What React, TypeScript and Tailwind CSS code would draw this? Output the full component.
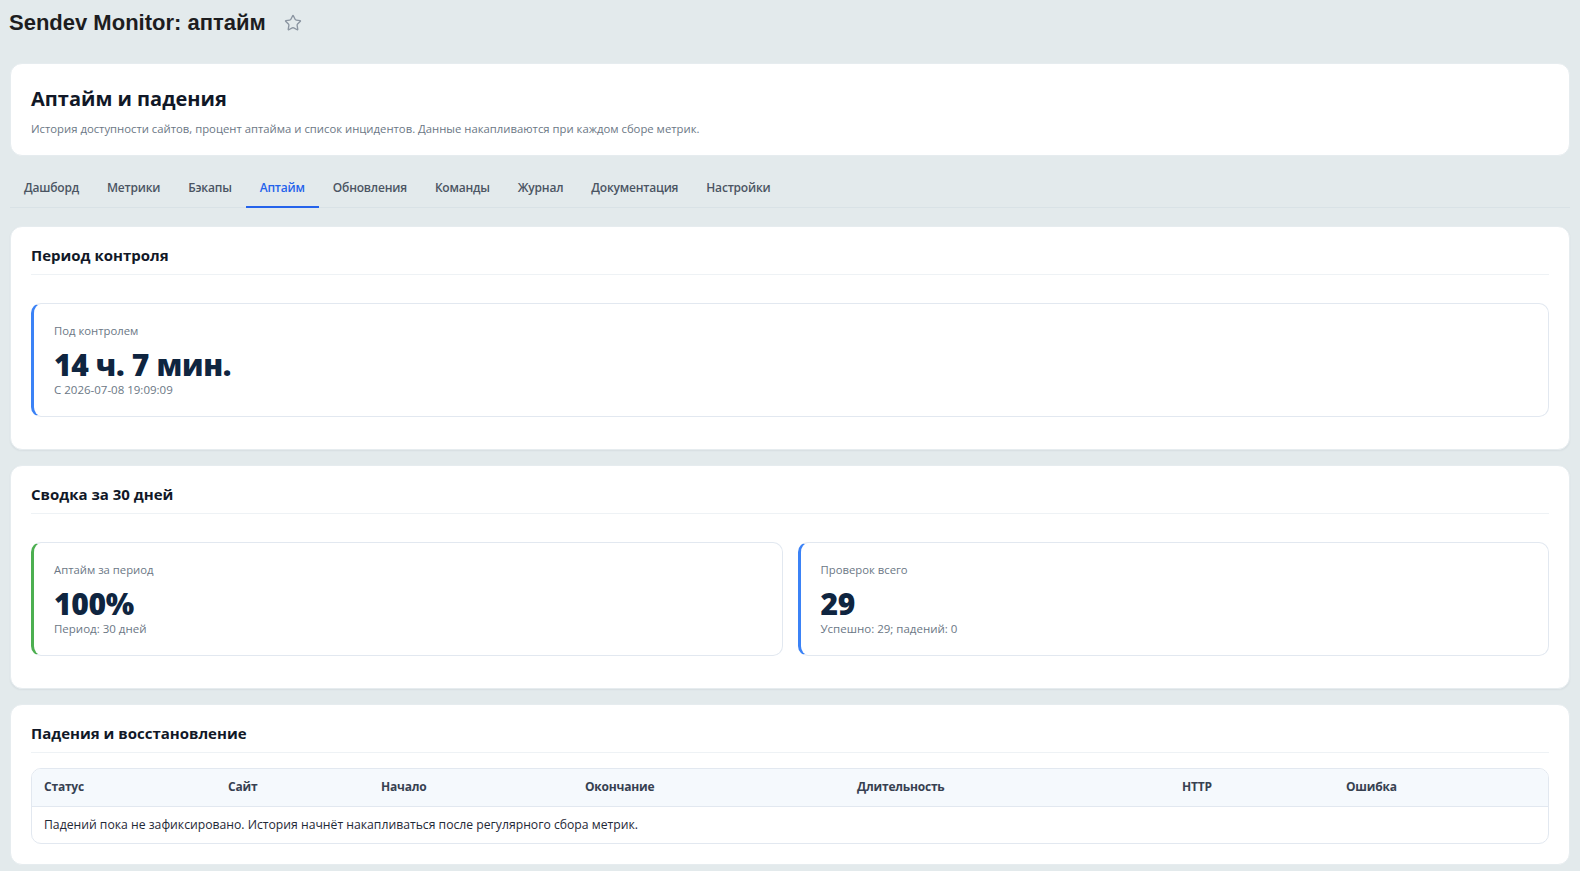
import { Star } from "lucide-react";

const tabs = ["Дашборд", "Метрики", "Бэкапы", "Аптайм", "Обновления", "Команды", "Журнал", "Документация", "Настройки"];

const columns = [
  { name: "Статус", w: "w-[184px]" },
  { name: "Сайт", w: "w-[153px]" },
  { name: "Начало", w: "w-[204px]" },
  { name: "Окончание", w: "w-[272px]" },
  { name: "Длительность", w: "w-[325px]" },
  { name: "HTTP", w: "w-[164px]" },
  { name: "Ошибка", w: "" },
];

function StatCard({ label, value, note, accent }: { label: string; value: string; note: string; accent: string }) {
  return (
    <div className={`flex-1 rounded-[10px] border border-[#e2e8f0] border-l-[3px] ${accent} bg-white pl-[20px] pt-[20px] pb-[19px]`}>
      <div className="text-[11.3px] leading-[14px] text-[#6b7785]">{label}</div>
      <div className="mt-[10px] text-[30px] leading-[33px] font-extrabold tracking-[-0.3px] text-[#0f2540]">{value}</div>
      <div className="mt-[1px] text-[11.5px] leading-[15px] text-[#6b7785]">{note}</div>
    </div>
  );
}

function Section({ title, children }: { title: string; children: React.ReactNode }) {
  return (
    <section className="rounded-[12px] bg-white px-[20px] pt-[18px] pb-[32px] shadow-[0_1px_2px_rgba(15,37,64,0.06)] border border-[#e6ecef]">
      <h2 className="text-[15px] leading-[20px] font-bold text-[#111827] pb-[9px] border-b border-[#eef2f5]">{title}</h2>
      <div className="mt-[28px]">{children}</div>
    </section>
  );
}

export default function App() {
  return (
    <div className="min-h-screen bg-[#e3eaec] px-[10px] pb-[10px] font-['Open_Sans',sans-serif]">
      {/* page title */}
      <div className="flex items-center h-[44px] pt-[1px]">
        <h1 className="text-[22px] leading-[26px] font-bold text-[#1d1d1f] font-['Liberation_Sans',Arial,sans-serif] -ml-[1px]">
          Sendev Monitor: аптайм
        </h1>
        <Star className="ml-[18px] w-[18px] h-[18px] text-[#8b95a1]" strokeWidth={1.8} />
      </div>

      {/* header card */}
      <div className="mt-[19px] rounded-[12px] bg-white px-[20px] pt-[22px] pb-[19px] border border-[#e6ecef]">
        <h2 className="text-[20px] leading-[26px] font-bold text-[#111827]">Аптайм и падения</h2>
        <p className="mt-[9px] text-[11.3px] leading-[15px] text-[#6b7785]">
          История доступности сайтов, процент аптайма и список инцидентов. Данные накапливаются при каждом сборе метрик.
        </p>
      </div>

      {/* tabs */}
      <nav className="mt-[10px] flex border-b border-[#d9e2e6]">
        {tabs.map((t) => (
          <div
            key={t}
            className={`px-[14px] pt-[14px] pb-[10px] text-[12px] leading-[16px] font-semibold border-b-[2px] -mb-[1px] tracking-[-0.2px] ${
              t === "Аптайм" ? "text-[#2563eb] border-[#2563eb]" : "text-[#4b5563] border-transparent"
            }`}
          >
            {t}
          </div>
        ))}
      </nav>

      <div className="mt-[18px] flex flex-col gap-[15px]">
        <Section title="Период контроля">
          <StatCard label="Под контролем" value="14 ч. 7 мин." note="С 2026-07-08 19:09:09" accent="border-l-[#3b82f6]" />
        </Section>

        <Section title="Сводка за 30 дней">
          <div className="flex gap-[15px]">
            <StatCard label="Аптайм за период" value="100%" note="Период: 30 дней" accent="border-l-[#4caf50]" />
            <StatCard label="Проверок всего" value="29" note="Успешно: 29; падений: 0" accent="border-l-[#3b82f6]" />
          </div>
        </Section>

        <section className="rounded-[12px] bg-white px-[20px] pt-[18px] pb-[20px] border border-[#e6ecef]">
          <h2 className="text-[15px] leading-[20px] font-bold text-[#111827] pb-[9px] border-b border-[#eef2f5]">Падения и восстановление</h2>
          <div className="mt-[15px] rounded-[10px] border border-[#e2e8f0] overflow-hidden">
            <table className="w-full table-fixed border-collapse">
              <thead>
                <tr className="bg-[#f5f9fd] border-b border-[#e2e8f0]">
                  {columns.map((c) => (
                    <th key={c.name} className={`${c.w} px-[12px] h-[37px] text-left text-[12px] font-bold text-[#374151] tracking-[-0.2px]`}>
                      {c.name}
                    </th>
                  ))}
                </tr>
              </thead>
              <tbody>
                <tr>
                  <td colSpan={7} className="px-[12px] h-[37px] text-[12.2px] text-[#1f2937]">
                    Падений пока не зафиксировано. История начнёт накапливаться после регулярного сбора метрик.
                  </td>
                </tr>
              </tbody>
            </table>
          </div>
        </section>
      </div>
    </div>
  );
}
